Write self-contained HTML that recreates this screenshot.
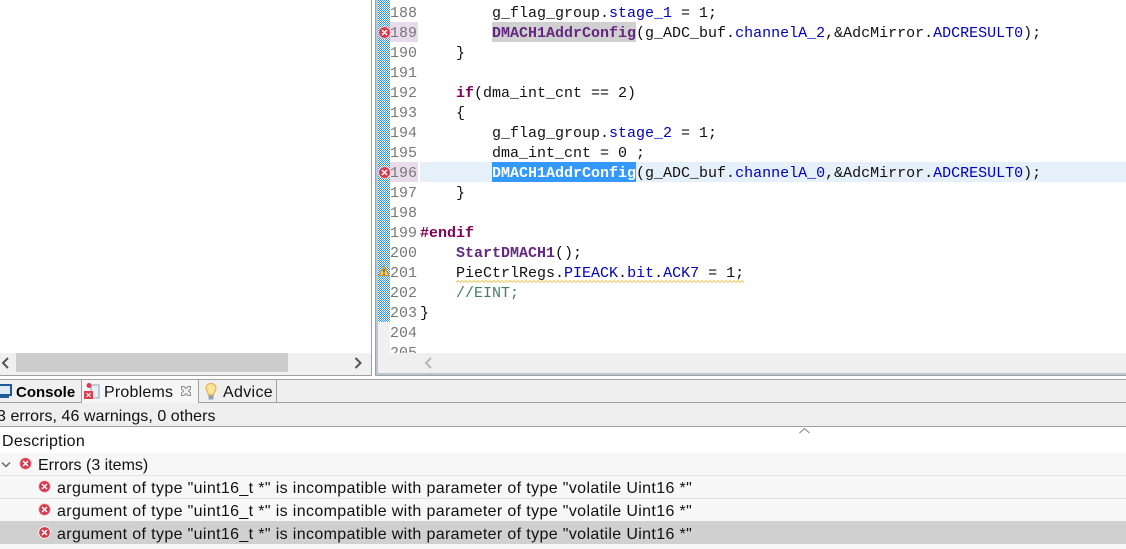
<!DOCTYPE html>
<html><head><meta charset="utf-8"><style>
html,body{margin:0;padding:0;width:1126px;height:549px;overflow:hidden;background:#fff}
div{position:absolute;box-sizing:border-box}
.code,.ln{font:15px/20px "Liberation Mono",monospace;white-space:pre;color:#111;height:20px}
.ln{left:390px;width:28px;color:#787878;text-align:left}
.code{left:420px}
.f{color:#642880;font-weight:bold}.k{color:#7f0055;font-weight:bold}.b{color:#0000c0}.c{color:#3f7f5f}
.ui{font:16px/22px "Liberation Sans",sans-serif;white-space:pre;color:#111}
.m{letter-spacing:.36px}
</style></head><body>
<!-- left panel -->
<div style="left:0;top:353px;width:371px;height:22px;background:#f0f0f0"></div>
<div style="left:16px;top:353px;width:272px;height:19px;background:#cdcdcd"></div>
<div style="left:371px;top:0;width:1px;height:376px;background:#a0a0a0"></div>
<div style="left:0;top:375px;width:372px;height:1px;background:#a0a0a0"></div>
<svg style="position:absolute;left:0;top:353px" width="372" height="20"><path d="M8 5L3 10L8 15" fill="none" stroke="#555" stroke-width="2"/><path d="M355.500 5L360.500 10L355.500 15" fill="none" stroke="#555" stroke-width="2"/></svg>
<!-- editor frame -->
<div style="left:375px;top:0;width:1px;height:376px;background:#a0a0a0"></div>
<div style="left:376px;top:0;width:2px;height:376px;background:#b8c6d6"></div>
<div style="left:376px;top:373px;width:750px;height:2px;background:#b8c6d6"></div>
<div style="left:376px;top:375px;width:750px;height:1px;background:#a0a0a0"></div>
<div style="left:378px;top:0;width:12px;height:353px;background:#f0f0f0"></div>
<svg style="position:absolute;left:378px;top:0" width="12" height="322" shape-rendering="crispEdges"><defs><pattern id="ck" width="2" height="2" patternUnits="userSpaceOnUse"><rect width="2" height="2" fill="#fff"/><rect width="1" height="1" fill="#2f95f5"/><rect x="1" y="1" width="1" height="1" fill="#2f95f5"/></pattern></defs><rect width="12" height="322" fill="#4fa6f6"/><rect width="12" height="322" fill="url(#ck)"/></svg>
<div style="left:378px;top:353px;width:748px;height:20px;background:#efefef"></div>
<svg style="position:absolute;left:420px;top:353px" width="16" height="20"><path d="M11 5L6 10L11 15" fill="none" stroke="#b8b8b8" stroke-width="2"/></svg>
<!-- highlights -->
<div style="left:390px;top:22px;width:28px;height:20px;background:#e8dcec"></div>
<div style="left:390px;top:162px;width:28px;height:20px;background:#e8dcec"></div>
<div style="left:420px;top:162px;width:706px;height:20px;background:#e6f0fb"></div>
<div style="left:492px;top:22px;width:144px;height:20px;background:#d0d0d0"></div>
<div style="left:492px;top:162px;width:144px;height:20px;background:#3399ff"></div>
<!-- numbers -->
<div class="ln" style="top:4px">188</div><div class="ln" style="top:24px">189</div><div class="ln" style="top:44px">190</div><div class="ln" style="top:64px">191</div><div class="ln" style="top:84px">192</div><div class="ln" style="top:104px">193</div><div class="ln" style="top:124px">194</div><div class="ln" style="top:144px">195</div><div class="ln" style="top:164px">196</div><div class="ln" style="top:184px">197</div><div class="ln" style="top:204px">198</div><div class="ln" style="top:224px">199</div><div class="ln" style="top:244px">200</div><div class="ln" style="top:264px">201</div><div class="ln" style="top:284px">202</div><div class="ln" style="top:304px">203</div><div class="ln" style="top:324px">204</div>
<div style="left:390px;top:344px;width:28px;height:9px;overflow:hidden"><div class="ln" style="left:0;top:0">205</div></div>
<!-- code -->
<div class="code" style="top:4px">        g_flag_group.<span class="b">stage_1</span> = 1;</div>
<div class="code" style="top:24px">        <span class="f">DMACH1AddrConfig</span>(g_ADC_buf.<span class="b">channelA_2</span>,&amp;AdcMirror.<span class="b">ADCRESULT0</span>);</div>
<div class="code" style="top:44px">    }</div>
<div class="code" style="top:84px">    <span class="k">if</span>(dma_int_cnt == 2)</div>
<div class="code" style="top:104px">    {</div>
<div class="code" style="top:124px">        g_flag_group.<span class="b">stage_2</span> = 1;</div>
<div class="code" style="top:144px">        dma_int_cnt = 0 ;</div>
<div class="code" style="top:164px">        <span class="f" style="color:#fff">DMACH1AddrConfig</span>(g_ADC_buf.<span class="b">channelA_0</span>,&amp;AdcMirror.<span class="b">ADCRESULT0</span>);</div>
<div class="code" style="top:184px">    }</div>
<div class="code" style="top:224px"><span class="k">#endif</span></div>
<div class="code" style="top:244px">    <span class="f">StartDMACH1</span>();</div>
<div class="code" style="top:264px">    PieCtrlRegs.<span class="b">PIEACK</span>.<span class="b">bit</span>.<span class="b">ACK7</span> = 1;</div>
<div class="code" style="top:284px">    <span class="c">//EINT;</span></div>
<div class="code" style="top:304px">}</div>
<svg style="position:absolute;left:456px;top:280px" width="288" height="3"><defs><pattern id="sq" width="4" height="3" patternUnits="userSpaceOnUse"><path d="M0 2.500L2 .5 4 2.500" fill="none" stroke="#ecc860" stroke-width="1"/></pattern></defs><rect width="288" height="3" fill="url(#sq)"/></svg>
<!-- markers -->
<svg style="position:absolute;left:378px;top:26px" width="13" height="13" viewBox="0 0 13 13"><circle cx="6.500" cy="6.500" r="5.800" fill="#d8394b" stroke="#f3c3c8" stroke-width="0.800"/><path d="M4 4L9 9M9 4L4 9" stroke="#fff" stroke-width="1.500"/></svg>
<svg style="position:absolute;left:378px;top:166px" width="13" height="13" viewBox="0 0 13 13"><circle cx="6.500" cy="6.500" r="5.800" fill="#d8394b" stroke="#f3c3c8" stroke-width="0.800"/><path d="M4 4L9 9M9 4L4 9" stroke="#fff" stroke-width="1.500"/></svg>
<svg style="position:absolute;left:378px;top:265px" width="12" height="12" viewBox="0 0 12 12"><path d="M6 .8L11.300 10.800H.7Z" fill="#f6cf6c" stroke="#b98a2a"/><path d="M6 4V7.500M6 8.500V10" stroke="#5a3d10" stroke-width="1.300"/></svg>
<!-- bottom panel -->
<div style="left:0;top:379px;width:1126px;height:48px;background:#efefef"></div>
<div style="left:0;top:379px;width:1126px;height:1px;background:#a0a0a0"></div>
<div style="left:0;top:402px;width:1126px;height:1px;background:#a0a0a0"></div>
<div style="left:0;top:426px;width:1126px;height:1px;background:#a0a0a0"></div>
<div style="left:81px;top:380px;width:118px;height:23px;background:#f6f6f6;border-left:1px solid #a0a0a0;border-right:1px solid #a0a0a0"></div>
<div style="left:276px;top:380px;width:1px;height:22px;background:#a0a0a0"></div>
<svg style="position:absolute;left:0;top:384px" width="14" height="15"><rect x="-4" y="1" width="15" height="10" fill="#dfe9f5" stroke="#1f5a96" stroke-width="2"/><path d="M0 13H9" stroke="#1f5a96" stroke-width="2"/></svg>
<div class="ui" style="left:16px;top:382px;font-weight:bold;color:#000;font-size:15px">Console</div>
<svg style="position:absolute;left:83px;top:382px" width="17" height="18"><rect x="8" y="3" width="8" height="13" fill="#e8eef5" stroke="#8aa0b8"/><circle cx="6" cy="3.500" r="2.500" fill="#d84050"/><rect x="1" y="9" width="9" height="8" fill="#d84050"/><path d="M3.500 11L7.500 15M7.500 11L3.500 15" stroke="#fff"/></svg>
<div class="ui" style="left:104px;top:382px;letter-spacing:.2px">Problems</div>
<svg style="position:absolute;left:180px;top:385px" width="12" height="12"><path d="M1.500 1.500H4L6 3.500 8 1.500H10.500V4L8.500 6 10.500 8V10.500H8L6 8.500 4 10.500H1.500V8L3.500 6 1.500 4Z" fill="#f2f2f2" stroke="#8c8c8c"/></svg>
<svg style="position:absolute;left:204px;top:382px" width="14" height="19"><path d="M7 1.500C3.500 1.500 2 4 2 6.500C2 9 4.500 10.500 4.500 13H9.500C9.500 10.500 12 9 12 6.500C12 4 10.500 1.500 7 1.500Z" fill="#fbe39a" stroke="#e0a93a"/><rect x="4.500" y="13.500" width="5" height="4" fill="#8fa3b5"/></svg>
<div class="ui" style="left:223px;top:382px;letter-spacing:.33px">Advice</div>
<div class="ui" style="left:-3px;top:406px;letter-spacing:.05px">3 errors, 46 warnings, 0 others</div>
<svg style="position:absolute;left:799px;top:427px" width="11" height="7"><path d="M.5 6L5.500 1.500 10.500 6" fill="none" stroke="#808080"/></svg>
<div class="ui" style="left:2px;top:431px;letter-spacing:.27px">Description</div>
<div style="left:0;top:453px;width:1126px;height:96px;background:#f7f7f7"></div>
<div style="left:0;top:475px;width:1126px;height:1px;background:#e2e2e2"></div>
<div style="left:0;top:498px;width:1126px;height:1px;background:#e2e2e2"></div>
<div style="left:0;top:521px;width:1126px;height:23px;background:#d0d0d0"></div>
<svg style="position:absolute;left:1px;top:460px" width="10" height="10"><path d="M1 2.500L5 6.500 9 2.500" fill="none" stroke="#666" stroke-width="1.500"/></svg>
<svg style="position:absolute;left:19px;top:457px" width="13" height="13" viewBox="0 0 13 13"><circle cx="6.500" cy="6.500" r="5.800" fill="#d8394b" stroke="#f3c3c8" stroke-width="0.800"/><path d="M4 4L9 9M9 4L4 9" stroke="#fff" stroke-width="1.500"/></svg>
<div class="ui" style="left:38px;top:455px">Errors (3 items)</div>
<svg style="position:absolute;left:38px;top:480px" width="13" height="13" viewBox="0 0 13 13"><circle cx="6.500" cy="6.500" r="5.800" fill="#d8394b" stroke="#f3c3c8" stroke-width="0.800"/><path d="M4 4L9 9M9 4L4 9" stroke="#fff" stroke-width="1.500"/></svg>
<div class="ui m" style="left:57px;top:478px">argument of type "uint16_t *" is incompatible with parameter of type "volatile Uint16 *"</div>
<svg style="position:absolute;left:38px;top:503px" width="13" height="13" viewBox="0 0 13 13"><circle cx="6.500" cy="6.500" r="5.800" fill="#d8394b" stroke="#f3c3c8" stroke-width="0.800"/><path d="M4 4L9 9M9 4L4 9" stroke="#fff" stroke-width="1.500"/></svg>
<div class="ui m" style="left:57px;top:501px">argument of type "uint16_t *" is incompatible with parameter of type "volatile Uint16 *"</div>
<svg style="position:absolute;left:38px;top:526px" width="13" height="13" viewBox="0 0 13 13"><circle cx="6.500" cy="6.500" r="5.800" fill="#d8394b" stroke="#fff" stroke-width="0.800"/><path d="M4 4L9 9M9 4L4 9" stroke="#fff" stroke-width="1.500"/></svg>
<div class="ui m" style="left:57px;top:524px">argument of type "uint16_t *" is incompatible with parameter of type "volatile Uint16 *"</div>
</body></html>
